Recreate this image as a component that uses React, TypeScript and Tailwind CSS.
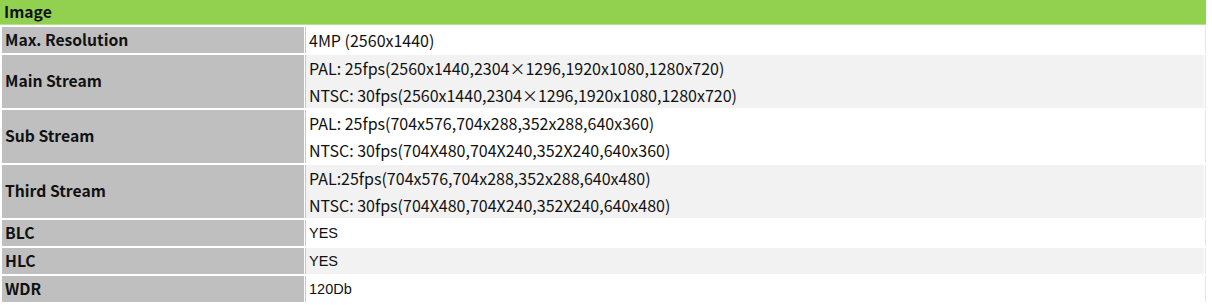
type Row = {
  label: string;
  values: string[];
  alt: boolean;
  arial?: boolean;
};

const rows: Row[] = [
  { label: 'Max. Resolution', values: ['4MP (2560x1440)'], alt: false },
  {
    label: 'Main Stream',
    values: [
      'PAL: 25fps(2560x1440,2304×1296,1920x1080,1280x720)',
      'NTSC: 30fps(2560x1440,2304×1296,1920x1080,1280x720)',
    ],
    alt: true,
  },
  {
    label: 'Sub Stream',
    values: ['PAL: 25fps(704x576,704x288,352x288,640x360)', 'NTSC: 30fps(704X480,704X240,352X240,640x360)'],
    alt: false,
  },
  {
    label: 'Third Stream',
    values: ['PAL:25fps(704x576,704x288,352x288,640x480)', 'NTSC: 30fps(704X480,704X240,352X240,640x480)'],
    alt: true,
  },
  { label: 'BLC', values: ['YES'], alt: false, arial: true },
  { label: 'HLC', values: ['YES'], alt: true, arial: true },
  { label: 'WDR', values: ['120Db'], alt: false, arial: true },
];

function SpecRow({ row }: { row: Row }) {
  const tall = row.values.length > 1;
  return (
    <div className={`mt-[2px] flex ${tall ? 'h-[53px]' : 'h-[26px]'}`}>
      <div className="ml-[2px] flex w-[302px] items-center bg-[#bfbfbf] pb-[1px] pl-[3px] text-[15.7px] font-bold text-[#111]">
        {row.label}
      </div>
      <div className="ml-[1px] w-[1px] bg-[#c9c9c9]" />
      <div
        className={`flex w-[898px] flex-col justify-center pl-[3px] text-[#111] ${
          row.alt ? 'bg-[#f2f2f2]' : 'bg-white'
        } ${row.arial ? "pt-[2px] font-['Liberation_Sans',Arial,sans-serif] text-[14.5px]" : 'text-[16px]'}`}
      >
        {row.values.map((v) => (
          <div key={v} className={tall ? 'flex h-[26.5px] items-center' : ''}>
            {v}
          </div>
        ))}
      </div>
      <div className="ml-[1px] w-[1px] bg-[#e6e6e6]" />
    </div>
  );
}

export default function App() {
  return (
    <div className="h-[305px] w-[1212px] bg-white font-['Noto_Sans_CJK_SC',sans-serif]">
      <div className="w-[1206px]">
        <div className="flex h-[25px] items-center border-b border-[#b8e08c] bg-[#92d050] pb-[1px] pl-[4px] text-[15.7px] font-bold text-[#111]">
          Image
        </div>
        {rows.map((r) => (
          <SpecRow key={r.label} row={r} />
        ))}
      </div>
    </div>
  );
}
